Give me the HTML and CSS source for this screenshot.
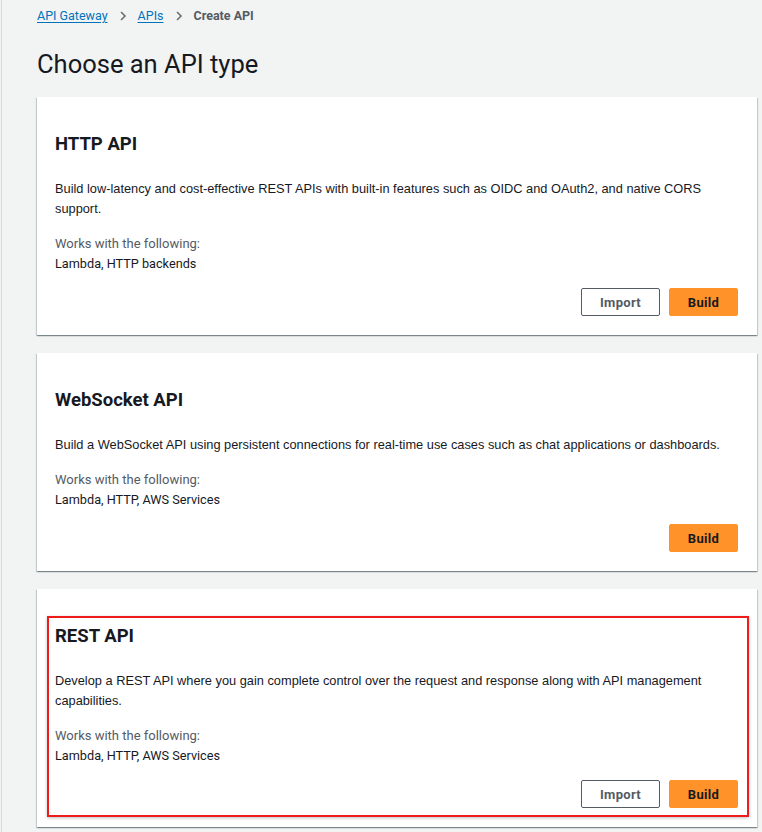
FILE: index.html
```html
<!DOCTYPE html>
<html>
<head>
<meta charset="utf-8">
<link rel="stylesheet" href="styles.css">
</head>
<body>
<div class="page">
  <nav class="breadcrumb">
    <a href="#" class="crumb-link">API Gateway</a>
    <span class="sep"><svg width="8" height="10" viewBox="0 0 8 10"><path d="M2 1l4 4-4 4" fill="none" stroke="#687078" stroke-width="1.6"/></svg></span>
    <a href="#" class="crumb-link">APIs</a>
    <span class="sep"><svg width="8" height="10" viewBox="0 0 8 10"><path d="M2 1l4 4-4 4" fill="none" stroke="#687078" stroke-width="1.6"/></svg></span>
    <span class="crumb-current">Create API</span>
  </nav>
  <h1 class="page-title">Choose an API type</h1>

  <section class="card">
    <h2 class="card-title">HTTP API</h2>
    <p class="card-desc">Build low-latency and cost-effective REST APIs with built-in features such as OIDC and OAuth2, and native CORS support.</p>
    <p class="works-label">Works with the following:</p>
    <p class="works-value">Lambda, HTTP backends</p>
    <div class="actions">
      <button class="btn btn-normal">Import</button>
      <button class="btn btn-primary">Build</button>
    </div>
  </section>

  <section class="card">
    <h2 class="card-title">WebSocket API</h2>
    <p class="card-desc">Build a WebSocket API using persistent connections for real-time use cases such as chat applications or dashboards.</p>
    <p class="works-label">Works with the following:</p>
    <p class="works-value">Lambda, HTTP, AWS Services</p>
    <div class="actions">
      <button class="btn btn-primary">Build</button>
    </div>
  </section>

  <section class="card card-highlight">
    <div class="highlight-box"></div>
    <h2 class="card-title">REST API</h2>
    <p class="card-desc">Develop a REST API where you gain complete control over the request and response along with API management capabilities.</p>
    <p class="works-label">Works with the following:</p>
    <p class="works-value">Lambda, HTTP, AWS Services</p>
    <div class="actions">
      <button class="btn btn-normal">Import</button>
      <button class="btn btn-primary">Build</button>
    </div>
  </section>
</div>
</body>
</html>
```

FILE: styles.css
```css
html, body {
  margin: 0;
  padding: 0;
  background: #f2f3f3;
}
body {
  font-family: Roboto, "Liberation Sans", Arial, sans-serif;
  color: #16191f;
  font-size: 12.7px;
  overflow: hidden;
}
.page {
  margin-left: 1px;
  border-left: 1px solid #d5dbdb;
  min-height: 832px;
  padding: 0 5px 0 35px;
}
.breadcrumb {
  display: flex;
  align-items: center;
  gap: 9px;
  padding-top: 6px;
  height: 20px;
  font-size: 12.5px;
  line-height: 20px;
}
.crumb-link {
  color: #0073bb;
  text-decoration: underline;
  text-underline-offset: 2px;
}
.sep {
  display: flex;
  align-items: center;
  padding: 0 2px;
}
.crumb-current {
  color: #545b64;
  font-weight: 700;
}
.page-title {
  margin: 0;
  padding-top: 23px;
  font-size: 25.5px;
  line-height: 30px;
  font-weight: 400;
  height: 30px;
  margin-bottom: 18px;
}
.card {
  position: relative;
  background: #fff;
  width: 720px;
  box-sizing: border-box;
  padding: 35px 19px 19px 18px;
  margin-bottom: 18px;
  box-shadow: 0 1px 1px 0 rgba(0,28,36,.3), 1px 1px 1px 0 rgba(0,28,36,.15), -1px 1px 1px 0 rgba(0,28,36,.15);
}
.card-title {
  margin: 0;
  font-size: 18.5px;
  line-height: 24px;
  font-weight: 700;
}
.card-desc {
  margin: 23px 0 0;
  line-height: 20px;
  font-family: "Liberation Sans", Arial, sans-serif;
  font-size: 12.8px;
}
.works-label {
  margin: 15px 0 0;
  color: #545b64;
  line-height: 20px;
  font-size: 13px;
}
.works-value {
  margin: 0;
  line-height: 20px;
}
.actions {
  display: flex;
  justify-content: flex-end;
  gap: 9px;
  margin-top: 14px;
}
.btn {
  font-family: inherit;
  font-size: 13px;
  font-weight: 700;
  height: 28px;
  box-sizing: border-box;
  border-radius: 2px;
  padding: 0;
  cursor: pointer;
  letter-spacing: 0.3px;
}
.btn-normal {
  background: #fff;
  color: #545b64;
  border: 1px solid #545b64;
  width: 79px;
}
.btn-primary {
  background: #ff9229;
  color: #16191f;
  border: 1px solid #ff9229;
  width: 69px;
}
.highlight-box {
  position: absolute;
  left: 10px;
  right: 8px;
  top: 27px;
  height: 201px;
  border: 2px solid #f01c1c;
  box-sizing: border-box;
  box-shadow: 0 1px 3px rgba(0,0,0,.25);
  pointer-events: none;
}
```
